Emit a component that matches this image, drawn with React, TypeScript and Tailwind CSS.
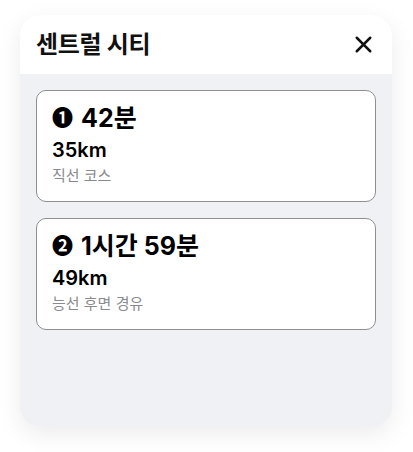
import { X } from "lucide-react";

const routes = [
  { badge: "❶", time: "42분", distance: "35km", note: "직선 코스" },
  { badge: "❷", time: "1시간 59분", distance: "49km", note: "능선 후면 경유" },
];

export default function App() {
  return (
    <div className="w-[413px] h-[452px] bg-white pt-[15px] pl-[20px] font-['Inter','Noto_Sans_CJK_KR',sans-serif]">
      <div className="w-[372px] h-[411px] rounded-[20px] overflow-hidden bg-[#f0f1f5] shadow-[0_8px_24px_rgba(0,0,0,0.08)] flex flex-col">
        {/* Header */}
        <div className="h-[59px] bg-white flex items-center justify-between pl-4 pr-[15px]">
          <h1 className="text-[24px] font-bold text-[#111] tracking-[-0.3px]">센트럴 시티</h1>
          <X className="w-[27px] h-[27px] text-[#111]" strokeWidth={2.2} />
        </div>

        {/* Routes */}
        <div className="flex flex-col gap-4 px-4 pt-4">
          {routes.map((r) => (
            <div
              key={r.time}
              className="h-[112px] bg-white border border-[#8e8e93] rounded-[10px] px-[15px] pt-[12px]"
            >
              <div className="flex items-center gap-[8px] text-[25px] leading-[30px] font-bold text-black">
                <span className="text-[21px]">{r.badge}</span>
                <span>{r.time}</span>
              </div>
              <div className="mt-[5px] text-[20px] leading-6 font-semibold text-black">{r.distance}</div>
              <div className="text-[15px] leading-5 mt-[4px] text-[#8a8a8e]">{r.note}</div>
            </div>
          ))}
        </div>
      </div>
    </div>
  );
}
